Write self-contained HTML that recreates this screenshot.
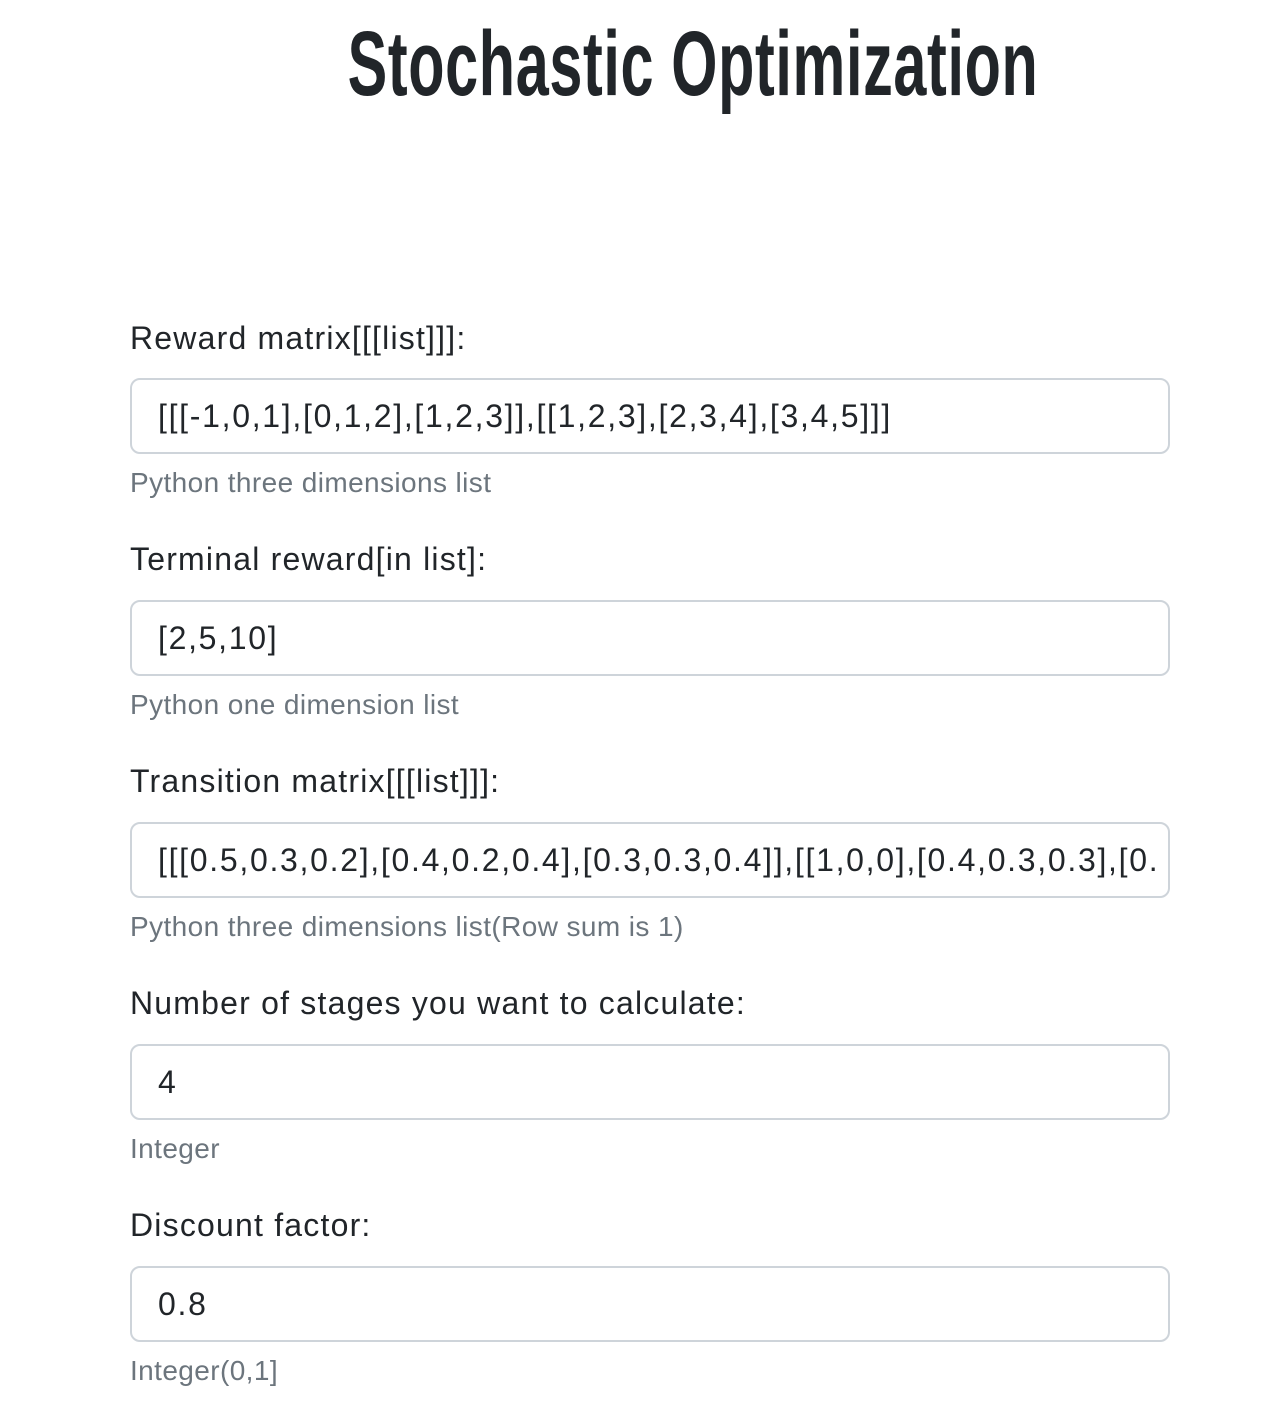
<!DOCTYPE html>
<html><head><meta charset="utf-8"><style>
body{margin:0;width:1276px;height:1404px;background:#fff;position:relative;overflow:hidden;font-family:"Liberation Sans","NanumGothic",sans-serif;color:#212529}
h1{position:absolute;left:0;width:1386px;top:14px;margin:0;text-align:center;font-size:92px;font-weight:bold;line-height:100px;transform:scaleX(0.645);transform-origin:693px 0;color:#212529;letter-spacing:1px}
.l{position:absolute;left:130px;font-size:32px;line-height:40px;letter-spacing:1.2px}
.i{position:absolute;left:130px;width:1036px;height:72px;border:2px solid #ced4da;border-radius:10px;box-sizing:content-box;font-size:32px;line-height:72px;overflow:hidden;white-space:nowrap;letter-spacing:1.7px}
.i span{position:absolute;left:26px}
.h{position:absolute;left:130px;font-size:28px;line-height:36px;color:#6c757d;letter-spacing:0.4px}
</style></head><body>
<h1>Stochastic Optimization</h1>
<div class="l" style="top:318px">Reward matrix[[[list]]]:</div>
<div class="i" style="top:378px"><span>[[[-1,0,1],[0,1,2],[1,2,3]],[[1,2,3],[2,3,4],[3,4,5]]]</span></div>
<div class="h" style="top:465px">Python three dimensions list</div>
<div class="l" style="top:539px">Terminal reward[in list]:</div>
<div class="i" style="top:600px"><span>[2,5,10]</span></div>
<div class="h" style="top:687px">Python one dimension list</div>
<div class="l" style="top:761px">Transition matrix[[[list]]]:</div>
<div class="i" style="top:822px"><span>[[[0.5,0.3,0.2],[0.4,0.2,0.4],[0.3,0.3,0.4]],[[1,0,0],[0.4,0.3,0.3],[0.</span></div>
<div class="h" style="top:909px">Python three dimensions list(Row sum is 1)</div>
<div class="l" style="top:983px">Number of stages you want to calculate:</div>
<div class="i" style="top:1044px"><span>4</span></div>
<div class="h" style="top:1131px">Integer</div>
<div class="l" style="top:1205px">Discount factor:</div>
<div class="i" style="top:1266px"><span>0.8</span></div>
<div class="h" style="top:1353px">Integer(0,1]</div>
</body></html>
